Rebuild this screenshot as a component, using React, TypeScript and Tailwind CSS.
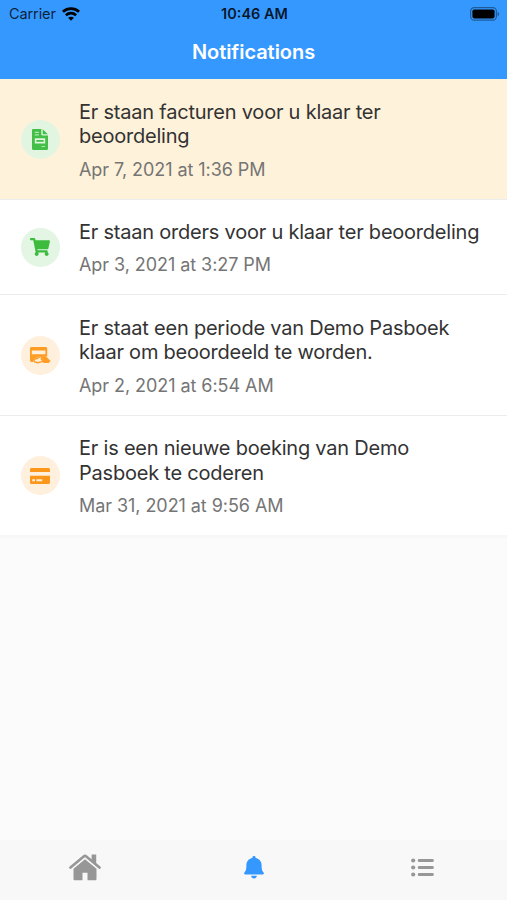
import type { ReactNode } from "react";
import { FaShoppingCart } from "react-icons/fa";

type Notification = {
  id: number;
  lines: string[];
  date: string;
  icon: ReactNode;
  iconClass: string;
  rowClass: string;
};

function WifiIcon() {
  return (
    <svg width="18" height="14" viewBox="0 0 18 14" fill="none" stroke="black" strokeWidth="2.8" aria-hidden>
      <path d="M.9 4.800C5.500.6 12.500.6 17.100 4.800" />
      <path d="M3.900 8.200c3-2.600 7.200-2.600 10.200 0" />
      <path d="M9 13.700 6.100 10.800c1.600-1.500 4.200-1.500 5.800 0Z" fill="black" stroke="none" />
    </svg>
  );
}

function BatteryIcon() {
  return (
    <svg width="30" height="14" viewBox="0 0 30 14" aria-hidden>
      <rect x="0.6" y="0.6" width="25.8" height="12.6" rx="3.6" fill="none" stroke="black" strokeOpacity="0.4" strokeWidth="1.2" />
      <rect x="2.4" y="2.4" width="22.2" height="9" rx="1.8" fill="black" />
      <path d="M27.600 4.800c2 .8 2 3.600 0 4.400Z" fill="black" fillOpacity="0.45" />
    </svg>
  );
}

function InvoiceIcon() {
  return (
    <svg width="16" height="21" viewBox="0 0 16 21" aria-hidden>
      <path
        fill="currentColor"
        fillRule="evenodd"
        d="M1.200 0H9.300V5.300C9.300 6 9.800 6.500 10.500 6.500H16V19.800C16 20.500 15.500 21 14.800 21H1.200C.5 21 0 20.500 0 19.800V1.200C0 .5.500 0 1.200 0ZM2.800 9.200V14.400H13.200V9.200Z"
      />
      <path fill="currentColor" d="M10.700.2 15.800 5.200H10.700ZM4.300 10.900h7.400v1.800h-7.400Z" />
      <path stroke="white" strokeOpacity="0.6" strokeWidth="1.200" d="M2.800 3.300h4M2.800 5.900h4M9.500 17.500h3.500" />
    </svg>
  );
}

function CardIcon() {
  return (
    <svg width="20" height="16" viewBox="0 0 20 16" fill="currentColor" aria-hidden>
      <path d="M0 3.900V1.500C0 .6.6 0 1.500 0h17c.9 0 1.500.6 1.500 1.500v2.400Z" />
      <path
        fillRule="evenodd"
        d="M0 7.800h20v6.700c0 .9-.6 1.500-1.500 1.500h-17C.6 16 0 15.400 0 14.500ZM2.200 11.200v2h2.800v-2ZM6.400 11.200v2h5.800v-2Z"
      />
    </svg>
  );
}

function CardHandIcon() {
  return (
    <svg width="21" height="17" viewBox="0 0 21 17" aria-hidden>
      <path
        fill="currentColor"
        fillRule="evenodd"
        d="M1.700 0h13.800c1 0 1.700.6 1.700 1.600v7.800L9.600 9 5 11.200 3 12.400l.4 2.500H1.700C.6 14.900 0 14.300 0 13.300V1.600C0 .6.7 0 1.700 0ZM1.800 3.500v3.800h13.600V3.500Z"
      />
      <path
        fill="#ffefdd"
        stroke="currentColor"
        strokeWidth="1.500"
        strokeLinejoin="round"
        d="M3.200 12.600 7.500 11.300l2.300-1.600h3l-1.600 2.400 2.200 1.200-2.400 1.600-3 .8-3-.6Z"
      />
      <path fill="currentColor" d="m12.600 9 3.200.3 4.800 4.600-2 2.100h-4.400l-3-1.200 2.500-1.800-1.700-1.600Z" />
    </svg>
  );
}

function HomeIcon() {
  return (
    <svg width="32" height="27" viewBox="0 0 32 27" fill="currentColor" aria-hidden>
      <path d="M22.600.6h4.600v10.900l-4.600-4.200Z" />
      <path
        fill="none"
        stroke="currentColor"
        strokeWidth="2.600"
        strokeLinecap="round"
        strokeLinejoin="round"
        d="M1.500 13.600 14.700 2.500c.8-.7 1.800-.7 2.600 0l13.200 11.100"
      />
      <path d="M16 5.200 27.500 14.800V25c0 .8-.5 1.300-1.300 1.300h-7.700v-7.600h-5v7.600H5.800c-.8 0-1.300-.5-1.300-1.300V14.800Z" />
    </svg>
  );
}

function BellIcon() {
  return (
    <svg width="20" height="23" viewBox="0 0 20 23" fill="currentColor" aria-hidden>
      <path d="M10 0c1 0 1.600.7 1.600 1.600v.4c3.700.7 6 3.400 6 7 0 4.500.6 6 1.900 7.400.9.8.4 2.100-.8 2.100H1.300c-1.200 0-1.700-1.300-.8-2.100C1.800 15 2.400 13.500 2.400 9c0-3.600 2.300-6.300 6-7v-.4C8.400.7 9 0 10 0Z" />
      <path d="M7.200 19.800h5.600c0 1.600-1.100 2.700-2.800 2.700s-2.800-1.100-2.800-2.700Z" />
    </svg>
  );
}

function ListIcon() {
  return (
    <svg width="23" height="19" viewBox="0 0 23 19" fill="currentColor" aria-hidden>
      <circle cx="2.200" cy="2.500" r="2.100" />
      <circle cx="2.200" cy="9.500" r="2.100" />
      <circle cx="2.200" cy="16.500" r="2.100" />
      <rect x="6.800" y="0.900" width="16" height="3.200" rx="1.400" />
      <rect x="6.800" y="7.900" width="16" height="3.200" rx="1.400" />
      <rect x="6.800" y="14.900" width="16" height="3.200" rx="1.400" />
    </svg>
  );
}

const NOTIFICATIONS: Notification[] = [
  {
    id: 1,
    lines: ["Er staan facturen voor u klaar ter", "beoordeling"],
    date: "Apr 7, 2021 at 1:36 PM",
    icon: <InvoiceIcon />,
    iconClass: "bg-[#e2f5e1] text-[#43bf47]",
    rowClass: "h-[121px] bg-[#fff2da]",
  },
  {
    id: 2,
    lines: ["Er staan orders voor u klaar ter beoordeling"],
    date: "Apr 3, 2021 at 3:27 PM",
    icon: <FaShoppingCart size={20} />,
    iconClass: "bg-[#e3f5e3] text-[#3dbb3d]",
    rowClass: "h-[95px] bg-white",
  },
  {
    id: 3,
    lines: ["Er staat een periode van Demo Pasboek", "klaar om beoordeeld te worden."],
    date: "Apr 2, 2021 at 6:54 AM",
    icon: <CardHandIcon />,
    iconClass: "bg-[#ffefdd] text-[#ff9c24]",
    rowClass: "h-[121px] bg-white",
  },
  {
    id: 4,
    lines: ["Er is een nieuwe boeking van Demo", "Pasboek te coderen"],
    date: "Mar 31, 2021 at 9:56 AM",
    icon: <CardIcon />,
    iconClass: "bg-[#ffefdd] text-[#fb981b]",
    rowClass: "h-[119px] bg-white",
  },
];

export default function App() {
  return (
    <div className="flex h-[900px] w-[507px] flex-col overflow-hidden bg-[#fbfbfb] font-['Inter','Liberation_Sans',sans-serif]">
      <header className="h-[79px] shrink-0 bg-[#3598ff]">
        <div className="grid h-[27px] grid-cols-3 items-center pr-[7px] pl-[9px]">
          <div className="flex items-center gap-[6px] text-[14.5px] tracking-[-0.1px] text-black/80">
            <span>Carrier</span>
            <WifiIcon />
          </div>
          <span className="text-center text-[14.5px] font-semibold whitespace-nowrap text-black/85">10:46 AM</span>
          <div className="flex justify-end">
            <BatteryIcon />
          </div>
        </div>
        <h1 className="text-center text-[20px] leading-[51px] font-semibold tracking-[-0.05px] text-white">Notifications</h1>
      </header>

      <ul className="shrink-0">
        {NOTIFICATIONS.map((n) => (
          <li
            key={n.id}
            className={`flex items-center border-b border-[#ececec] pl-[20.5px] last:border-b-0 ${n.rowClass}`}
          >
            <div className={`flex size-[39px] shrink-0 items-center justify-center rounded-full ${n.iconClass}`}>
              {n.icon}
            </div>
            <div className="ml-[19.5px] pt-[3px] whitespace-nowrap">
              <p className="text-[20px] leading-[24.500px] tracking-[-0.22px] text-[#333]">
                {n.lines.map((line) => (
                  <span key={line} className="block">
                    {line}
                  </span>
                ))}
              </p>
              <p className="mt-[8px] text-[18px] leading-[25px] tracking-[-0.06px] text-[#757575]">{n.date}</p>
            </div>
          </li>
        ))}
      </ul>
      <div className="h-[3px] shrink-0 bg-[#f7f7f7]" />

      <nav className="mt-auto grid h-[60px] shrink-0 grid-cols-3 bg-[#f8f8f8] pb-[6px] text-[#979797]">
        <button className="flex items-center justify-center" aria-label="Home">
          <HomeIcon />
        </button>
        <button className="flex items-center justify-center text-[#3598ff]" aria-label="Notifications">
          <BellIcon />
        </button>
        <button className="flex items-center justify-center" aria-label="Menu">
          <ListIcon />
        </button>
      </nav>
    </div>
  );
}
